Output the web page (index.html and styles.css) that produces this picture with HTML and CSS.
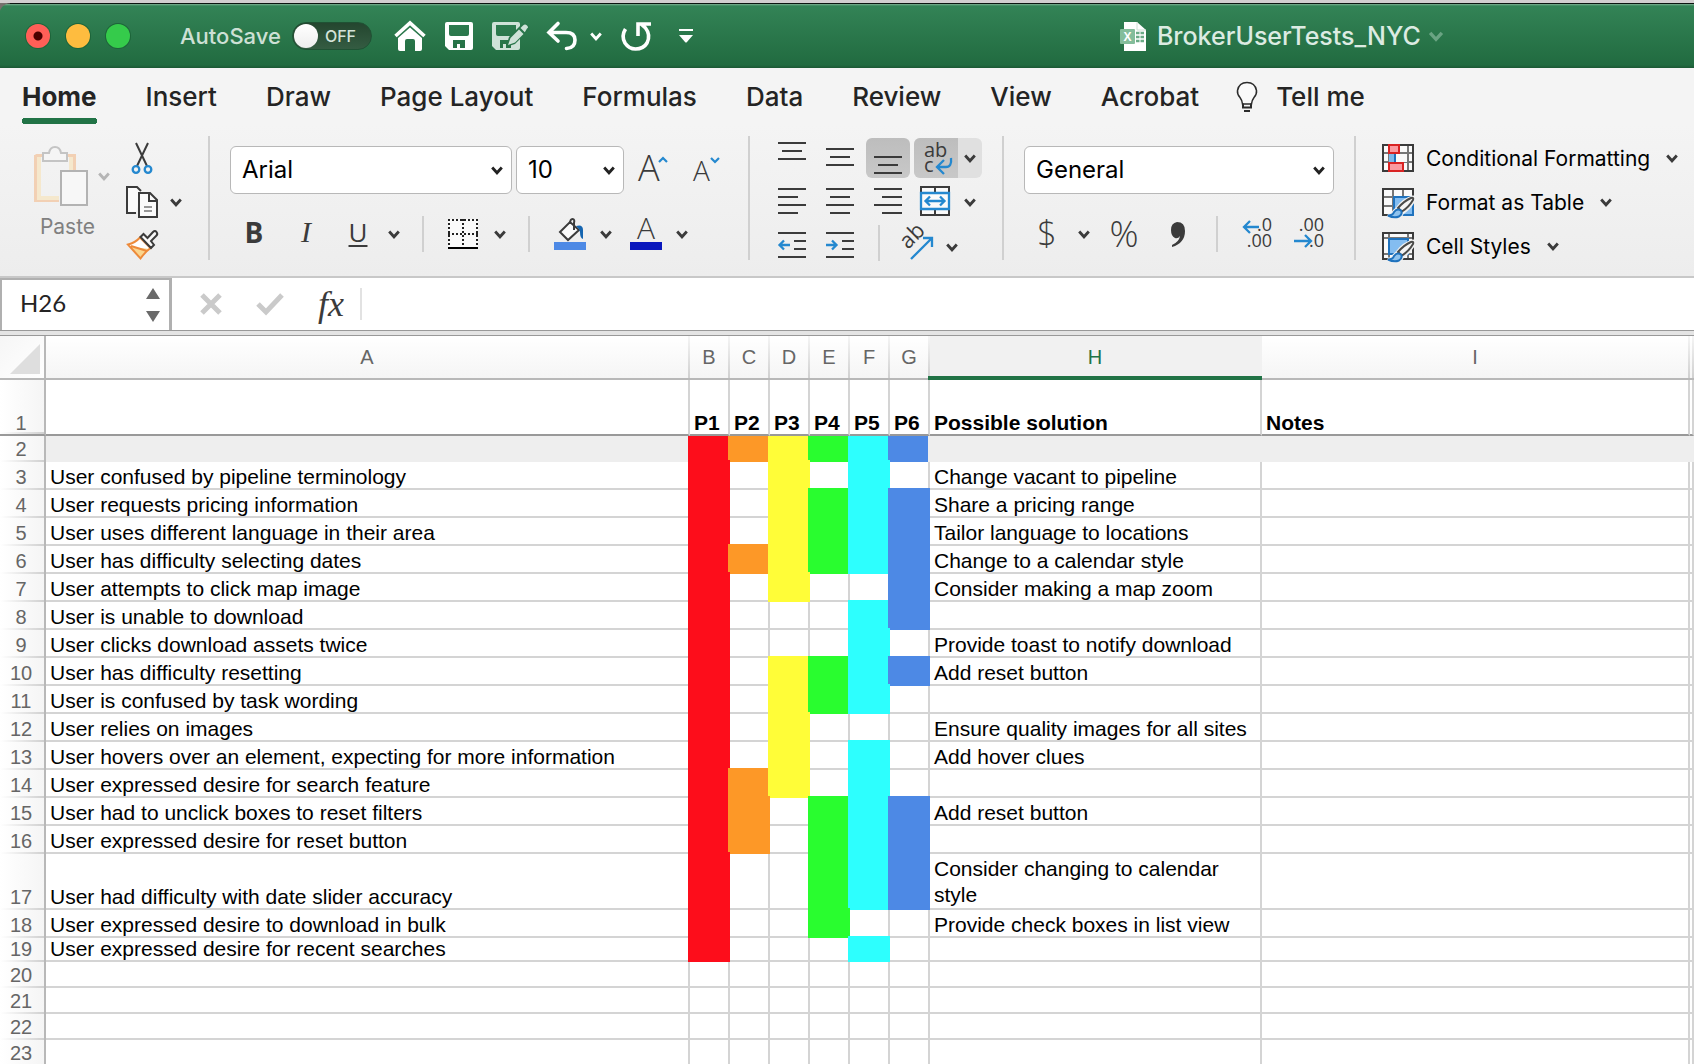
FILE: index.html
```html
<!DOCTYPE html>
<html lang="en">
<head>
<meta charset="utf-8">
<title>BrokerUserTests_NYC</title>
<link rel="stylesheet" href="styles.css">
</head>
<body>
<svg class="sprite" aria-hidden="true">
  <symbol id="chevron" viewBox="0 0 12 9"><path d="M1.2 1.5 6 6.8l4.8-5.3" fill="none" stroke="currentColor" stroke-width="2.8"/></symbol>
  <symbol id="brush" viewBox="0 0 34 32">
    <path d="M16 20Q22 12 31 9.500Q33 10 31 13Q27 20 21 24ZM6 27.500Q11 27.500 12 24Q15 20 19 22.500Q21 26 17 28.500Q12 30.500 6 27.500Z" fill="#f1f1f1" stroke="#f1f1f1" stroke-width="4"/>
    <path d="M16 20Q22 13 29 10Q32 9 31 12Q27 19 20 23.500Z" fill="#f4f4f4" stroke="#4a4a48" stroke-width="2"/>
    <path d="M6 27.500Q11 27.500 12 24Q15 20 19 22.500Q21 26 17 28.500Q12 30.500 6 27.500Z" fill="#8fc3ee" stroke="#1f72bd" stroke-width="2"/>
  </symbol>
</svg>

<header class="titlebar">
  <div class="lights">
    <button class="light light-close" aria-label="Close"></button>
    <button class="light light-min" aria-label="Minimize"></button>
    <button class="light light-max" aria-label="Zoom"></button>
  </div>
  <label class="autosave">AutoSave
    <span class="switch"><input type="checkbox"><span class="switch-state">OFF</span></span>
  </label>
  <div class="quick">
    <button aria-label="Home"><svg width="32" height="30" viewBox="0 0 32 30"><path d="M1.500 15 16 2l14.500 13" fill="none" stroke="#fff" stroke-width="3.600"/><path d="M4 17 16 6.500 28 17v11q0 2-2 2h-5V20q0-2-2-2h-6q-2 0-2 2v10H6q-2 0-2-2Z" fill="#fff"/></svg></button>
    <button aria-label="Save"><svg width="28" height="28" viewBox="0 0 28 28"><path fill="#fff" fill-rule="evenodd" d="M2 0h24q2 0 2 2v24q0 2-2 2H4l-4-4V2Q0 0 2 0ZM4 3v9q0 2 2 2h16q2 0 2-2V3ZM8 18v8h4v-4h3v4h5v-8Z"/></svg></button>
    <button aria-label="Save and edit"><svg width="36" height="28" viewBox="0 0 36 28"><path fill="#cfe2d8" fill-rule="evenodd" d="M2 0h24q2 0 2 2v24q0 2-2 2H4l-4-4V2Q0 0 2 0ZM4 3v9q0 2 2 2h16q2 0 2-2V3ZM8 18v8h3v-4h3v4h5v-8Z"/><path d="M14 25 17 15 30 2Q33 0 36 3t0 6L23 22Z" fill="#2a764b"/><path d="m16 23 2.500-7L27 7.500l4.500 4.500L23 20.500ZM28.500 6 31 3.500q2-2 4 0t0 3L32.800 10.300Z" fill="#cfe2d8"/></svg></button>
    <button aria-label="Undo"><svg width="30" height="28" viewBox="0 0 30 28"><path d="M11 1.500 2 10.500l9 8.500M3 10.500h16q9 0 9 7.500 0 8-8.500 8.500" fill="none" stroke="#fff" stroke-width="3.600" stroke-linecap="round"/></svg></button>
    <button class="tight" aria-label="Undo history"><svg class="chev thin" width="12" height="9"><use href="#chevron"/></svg></button>
    <button aria-label="Redo"><svg width="30" height="30" viewBox="0 0 30 30"><path d="M4.500 8Q0 15 4 22q4 6 10.500 6 8 0 11.500-6 4-8-1.500-15L20 3M17 15V3h13" fill="none" stroke="#fff" stroke-width="3.600"/></svg></button>
    <button class="wide" aria-label="Customize toolbar"><svg width="14" height="14" viewBox="0 0 14 14"><path d="M0 0h14v2H0ZM0 6h14l-6 7q-1 1-2 0Z" fill="#fff"/></svg></button>
  </div>
  <button class="doc">
    <svg width="26" height="30" viewBox="0 0 26 30"><path d="M4 1h13l9 8v21H4Z" fill="#fff"/><path d="M17 1v8h9" fill="none" stroke="#cfe0d6"/><rect y="8" width="15" height="15" rx="1" fill="#84bd9b"/><path d="M16 12h8M16 16h8M16 20h8" stroke="#6bab86" stroke-width="2.600"/><path d="M20 11v11" stroke="#fff"/><text x="7.500" y="20" text-anchor="middle" class="glyph-x">X</text></svg>
    <span>BrokerUserTests_NYC</span>
    <svg class="chev thin dim" width="16" height="11"><use href="#chevron"/></svg>
  </button>
</header>

<nav class="tabs" aria-label="Ribbon">
  <button class="tab active">Home</button>
  <button class="tab">Insert</button>
  <button class="tab">Draw</button>
  <button class="tab">Page Layout</button>
  <button class="tab">Formulas</button>
  <button class="tab">Data</button>
  <button class="tab">Review</button>
  <button class="tab">View</button>
  <button class="tab">Acrobat</button>
  <button class="tab tell"><svg width="22" height="32" viewBox="0 0 22 32"><path d="M6.500 23Q6 19 4 16.500 1 13 1.500 9.500 3 1.500 11 1.500t9.500 8Q21 13 18 16.500 16 19 15.500 23Z" fill="#fafafa" stroke="#2b2b2b" stroke-width="1.500"/><path d="M7 22.500v4h8v-4M8 30h6" fill="none" stroke="#2b2b2b" stroke-width="2"/></svg>Tell me</button>
</nav>

<section class="ribbon">
  <div class="group clipboard">
    <button class="paste">
      <svg width="54" height="60" viewBox="0 0 54 60"><path d="M1.500 9.500h39v20M25 54.500H1.500V9" fill="none" stroke="#f2d0b4" stroke-width="3"/><path d="M5 11v41h20M37 11v13" fill="none" stroke="#f5e8cd" stroke-width="4"/><path d="M9 15V7h6Q16 1 21 1t6 6h6v8Z" fill="#f5f5f5" stroke="#c4c4c4" stroke-width="2"/><path d="M27 25h26v34H27Z" fill="#f7f7f7" stroke="#b3b3b3" stroke-width="2"/></svg>
      <svg class="chev" width="12" height="9"><use href="#chevron"/></svg>
      <span>Paste</span>
    </button>
    <div class="cliptools">
      <button aria-label="Cut"><svg width="32" height="32" viewBox="0 0 32 32"><path d="M10 1 21 24M22 1 11 24" fill="none" stroke="#3b3b3b" stroke-width="2"/><g fill="none" stroke="#2488cf" stroke-width="2.300"><circle cx="10" cy="27.500" r="3.300"/><circle cx="22" cy="27.500" r="3.300"/></g></svg></button>
      <button aria-label="Copy"><svg width="32" height="32" viewBox="0 0 32 32"><path d="M10 27H1V1h10l4 4" fill="#fafafa" stroke="#3b3b3b" stroke-width="2"/><path d="M13 7h11l7 7v17H13Z" fill="#fafafa" stroke="#3b3b3b" stroke-width="2"/><path d="M23 7v8h8" fill="none" stroke="#3b3b3b" stroke-width="2"/><path d="M18 21h8M18 25h8" stroke="#777" stroke-width="1.600"/></svg><svg class="chev" width="12" height="9"><use href="#chevron"/></svg></button>
      <button aria-label="Format painter"><svg width="32" height="30" viewBox="0 0 32 30"><path d="M2 14.500Q9 13 14 7.500L24.500 18Q19 22 14.500 28.500Z" fill="#fff"/><path d="m5 17 19 2-9.500 9Z" fill="#fbd58d"/><path d="M2 14.500Q9 13 14 7.500L24.500 18Q19 22 14.500 28.500ZM5 16l16 5" fill="none" stroke="#ed8a3a" stroke-width="2"/><path d="m14.500 7 3-3 4 4 5.500-6q2-2 3.500 0t0 3.500L25 11l3 4-3 3Z" fill="#fafafa" stroke="#3b3b3b" stroke-width="2"/></svg></button>
    </div>
  </div>

  <div class="group font">
    <div class="row">
      <label class="combo combo-font"><select aria-label="Font"><option>Arial</option></select><svg class="chev" width="12" height="9"><use href="#chevron"/></svg></label>
      <label class="combo combo-size"><select aria-label="Font size"><option>10</option></select><svg class="chev" width="12" height="9"><use href="#chevron"/></svg></label>
      <button class="grow" aria-label="Increase font size"><svg width="32" height="32" viewBox="0 0 32 32"><text x="0" y="27" class="thin-glyph size-36">A</text><path d="m21 8 4-4 4 4" fill="none" stroke="#2488cf" stroke-width="2.200"/></svg></button>
      <button class="shrink" aria-label="Decrease font size"><svg width="30" height="32" viewBox="0 0 30 32"><text x="1" y="27" class="thin-glyph size-28">A</text><path d="m19 4 4 4 4-4" fill="none" stroke="#2488cf" stroke-width="2.200"/></svg></button>
    </div>
    <div class="fontrow">
      <button class="letter bold">B</button>
      <button class="letter ital">I</button>
      <button class="letter under">U</button>
      <button aria-label="Underline styles"><svg class="chev" width="12" height="9"><use href="#chevron"/></svg></button>
      <span class="sep"></span>
      <button aria-label="Borders"><svg width="30" height="30" viewBox="0 0 30 30"><path d="M0 0h30v28H0Z" fill="#fafafa"/><path d="M0 1h30M0 15h30M1 0v27M15 0v27M29 0v27" stroke="#222" stroke-width="2" stroke-dasharray="2 2"/><path d="M0 29h30" stroke="#000" stroke-width="2"/></svg></button>
      <button aria-label="More borders"><svg class="chev" width="12" height="9"><use href="#chevron"/></svg></button>
      <span class="sep"></span>
      <button aria-label="Fill color"><svg width="32" height="32" viewBox="0 0 32 32"><path d="M6 14 16 4l9 8-11 10Z" fill="#fafafa" stroke="#3b3b3b" stroke-width="2"/><path d="M16 6q0-5 2.500-5T20 5v7" fill="none" stroke="#3b3b3b" stroke-width="2"/><path d="M22 8q7-2 7 4v9q-3-1-3-7Q25 10 22 8Z" fill="#1565b0"/><path d="M0 24h32v8H0Z" fill="#4d89e5"/></svg></button>
      <button aria-label="More fill colors"><svg class="chev" width="12" height="9"><use href="#chevron"/></svg></button>
      <button aria-label="Font color"><svg width="32" height="32" viewBox="0 0 32 32"><text x="16" y="21" text-anchor="middle" class="thin-glyph size-30">A</text><path d="M0 24h32v8H0Z" fill="#0917bd"/></svg></button>
      <button aria-label="More font colors"><svg class="chev" width="12" height="9"><use href="#chevron"/></svg></button>
    </div>
  </div>

  <div class="group align">
    <div class="row">
      <button class="tool" aria-label="Align top"><svg width="44" height="40"><path d="M8 5h28M12 13h20M8 21h28"/></svg></button>
      <button class="tool" aria-label="Align middle"><svg width="44" height="40"><path d="M8 11h28M12 19h20M8 27h28"/></svg></button>
      <button class="tool on" aria-label="Align bottom"><svg width="44" height="40"><path d="M8 19h28M12 27h20M8 35h28"/></svg></button>
      <span class="split"><button class="tool on" aria-label="Wrap text"><svg width="44" height="40"><text x="10" y="19" class="glyph size-20">ab</text><text x="10" y="34" class="glyph size-20">c</text><path class="blue" d="M37 20q1 9-5 9h-8M30 22l-7 7 7 7"/></svg></button><button class="more" aria-label="Wrap options"><svg class="chev" width="12" height="9"><use href="#chevron"/></svg></button></span>
    </div>
    <div class="row">
      <button class="tool" aria-label="Align left"><svg width="44" height="40"><path d="M8 7h28M8 15h20M8 23h28M8 31h20"/></svg></button>
      <button class="tool" aria-label="Align center"><svg width="44" height="40"><path d="M8 7h28M12 15h20M8 23h28M12 31h20"/></svg></button>
      <button class="tool" aria-label="Align right"><svg width="44" height="40"><path d="M8 7h28M16 15h20M8 23h28M16 31h20"/></svg></button>
      <span class="split plain"><button class="tool" aria-label="Merge"><svg width="44" height="40"><path class="paper" d="M7 5h28v28H7ZM21 5v28"/><path class="blue paper" d="M7 11h28v16H7Z"/><path class="blue" d="M12 19h18M16 14.500 11.500 19l4.500 4.500M26 14.500l4.500 4.500-4.500 4.500"/></svg></button><button class="more" aria-label="Merge options"><svg class="chev" width="12" height="9"><use href="#chevron"/></svg></button></span>
    </div>
    <div class="row short">
      <button class="tool" aria-label="Decrease indent"><svg width="44" height="34"><path d="M8 7h28M24 15h12M24 23h12M8 31h28"/><path class="blue" d="M20 19H9M14 14.500 9.500 19l4.500 4.500"/></svg></button>
      <button class="tool" aria-label="Increase indent"><svg width="44" height="34"><path d="M8 7h28M24 15h12M24 23h12M8 31h28"/><path class="blue" d="M8 19h11M14 14.500l4.500 4.500-4.500 4.500"/></svg></button>
      <span class="sep"></span>
      <button class="tool orient" aria-label="Orientation"><svg width="34" height="34"><text transform="translate(8 24) rotate(-45)" class="glyph size-22">ab</text><path class="blue" d="M11 33 31 13M23 12h9v9"/></svg><svg class="chev" width="12" height="9"><use href="#chevron"/></svg></button>
    </div>
  </div>

  <div class="group number">
    <label class="combo combo-format"><select aria-label="Number format"><option>General</option></select><svg class="chev" width="12" height="9"><use href="#chevron"/></svg></label>
    <div class="numrow">
      <button aria-label="Currency"><svg width="24" height="36"><text x="11" y="30" text-anchor="middle" class="thin-glyph size-34">$</text></svg></button>
      <button aria-label="More currencies"><svg class="chev" width="12" height="9"><use href="#chevron"/></svg></button>
      <button aria-label="Percent"><svg width="30" height="36"><text x="14" y="31" text-anchor="middle" class="thin-glyph size-36">%</text></svg></button>
      <button aria-label="Comma style"><svg width="22" height="36" viewBox="0 0 22 36"><path d="M11 6q8 0 8 9 0 12-13 16v-2q7-3 8-9-2 3-5 2-4-2-4-8 0-7 6-8Z" fill="#3b3b3b"/></svg></button>
      <span class="sep"></span>
      <button aria-label="Increase decimal"><svg width="32" height="36"><text x="30" y="15" text-anchor="end" class="glyph size-18">.0</text><text x="30" y="31" text-anchor="end" class="glyph size-18">.00</text><path class="blue" d="M17 11H2M8 5l-6 6 6 6"/></svg></button>
      <button aria-label="Decrease decimal"><svg width="32" height="36"><text x="30" y="15" text-anchor="end" class="glyph size-18">.00</text><text x="30" y="31" text-anchor="end" class="glyph size-18">.0</text><path class="blue" d="M0 25h16M11 19l6 6-6 6"/></svg></button>
    </div>
  </div>

  <div class="group styles">
    <button class="stylebtn"><svg width="32" height="28" viewBox="0 0 32 28"><path d="M1 1h30v26H1Z" fill="#fafafa" stroke="#3b3b3b" stroke-width="2"/><path d="M2 9h28M2 18h28M7 2v24M17 2v24M26 2v24" stroke="#777" stroke-width="2"/><path d="M14 10h11v8H14Z" fill="#fafafa"/><path d="M7 9h7v10H7Z" fill="#7fb9ea"/><path d="M13 9v10" stroke="#1f72bd" stroke-width="2"/><path d="M7 1h10v8H7ZM7 19h14v8H7Z" fill="#fb9aa0" stroke="#d92323" stroke-width="2"/></svg>Conditional Formatting<svg class="chev" width="12" height="9"><use href="#chevron"/></svg></button>
    <button class="stylebtn"><svg width="32" height="28" viewBox="0 0 32 28"><path d="M1 1h30v26H1Z" fill="#fafafa" stroke="#3b3b3b" stroke-width="2"/><path d="M2 9h28M2 18h28M11 2v24M21 2v24" stroke="#777" stroke-width="2"/><path d="M12 9h19v18H12Z" fill="#84bdf0" stroke="#1f72bd" stroke-width="2"/><use href="#brush" width="34" height="32"/></svg>Format as Table<svg class="chev" width="12" height="9"><use href="#chevron"/></svg></button>
    <button class="stylebtn"><svg width="32" height="28" viewBox="0 0 32 28"><path d="M1 1h30v26H1Z" fill="#fafafa" stroke="#3b3b3b" stroke-width="2"/><path d="M2 6h28M2 22h28M7 2v24M26 2v24" stroke="#777" stroke-width="2"/><path d="M7 7h19v15H7Z" fill="#84bdf0" stroke="#1f72bd" stroke-width="2"/><use href="#brush" width="34" height="32"/></svg>Cell Styles<svg class="chev" width="12" height="9"><use href="#chevron"/></svg></button>
  </div>
</section>

<section class="formulabar">
  <div class="namebox">
    <input type="text" value="H26" aria-label="Name box">
    <svg width="14" height="34" viewBox="0 0 14 34"><path d="M7 0l7 11H0ZM0 23h14L7 34Z" fill="#6a6a6a"/></svg>
  </div>
  <button class="cancel" aria-label="Cancel"><svg width="22" height="22"><path d="m2 2 18 18M20 2 2 20" stroke="#cacaca" stroke-width="5"/></svg></button>
  <button class="enter" aria-label="Enter"><svg width="28" height="22"><path d="m2 11 8 8L26 2" fill="none" stroke="#cacaca" stroke-width="5"/></svg></button>
  <button class="fx" aria-label="Insert function">fx</button>
  <input class="formula" type="text" aria-label="Formula">
</section>

<main class="sheet">
<table>
  <colgroup><col class="c-num"><col class="c-a"><col class="c-p"><col class="c-p"><col class="c-p"><col class="c-p"><col class="c-p"><col class="c-p"><col class="c-h"><col class="c-i"><col></colgroup>
  <thead>
    <tr><th class="corner"><svg width="30" height="30"><path d="M30 0v30H0Z" fill="#dedede"/></svg></th><th>A</th><th>B</th><th>C</th><th>D</th><th>E</th><th>F</th><th>G</th><th class="current">H</th><th>I</th><th></th></tr>
  </thead>
  <tbody>
    <tr class="titles"><th>1</th><td></td><td>P1</td><td>P2</td><td>P3</td><td>P4</td><td>P5</td><td>P6</td><td>Possible solution</td><td>Notes</td><td></td></tr>
    <tr class="band"><th>2</th><td></td><td class="red"></td><td class="orange"></td><td class="yellow"></td><td class="green"></td><td class="cyan"></td><td class="blue-fill"></td><td></td><td></td><td></td></tr>
    <tr><th>3</th><td>User confused by pipeline terminology</td><td class="red"></td><td></td><td class="yellow"></td><td></td><td class="cyan"></td><td></td><td>Change vacant to pipeline</td><td></td><td></td></tr>
    <tr><th>4</th><td>User requests pricing information</td><td class="red"></td><td></td><td class="yellow"></td><td class="green"></td><td class="cyan"></td><td class="blue-fill"></td><td>Share a pricing range</td><td></td><td></td></tr>
    <tr><th>5</th><td>User uses different language in their area</td><td class="red"></td><td></td><td class="yellow"></td><td class="green"></td><td class="cyan"></td><td class="blue-fill"></td><td>Tailor language to locations</td><td></td><td></td></tr>
    <tr><th>6</th><td>User has difficulty selecting dates</td><td class="red"></td><td class="orange"></td><td class="yellow"></td><td class="green"></td><td class="cyan"></td><td class="blue-fill"></td><td>Change to a calendar style</td><td></td><td></td></tr>
    <tr><th>7</th><td>User attempts to click map image</td><td class="red"></td><td></td><td class="yellow"></td><td></td><td></td><td class="blue-fill"></td><td>Consider making a map zoom</td><td></td><td></td></tr>
    <tr><th>8</th><td>User is unable to download</td><td class="red"></td><td></td><td></td><td></td><td class="cyan"></td><td class="blue-fill"></td><td></td><td></td><td></td></tr>
    <tr><th>9</th><td>User clicks download assets twice</td><td class="red"></td><td></td><td></td><td></td><td class="cyan"></td><td></td><td>Provide toast to notify download</td><td></td><td></td></tr>
    <tr><th>10</th><td>User has difficulty resetting</td><td class="red"></td><td></td><td class="yellow"></td><td class="green"></td><td class="cyan"></td><td class="blue-fill"></td><td>Add reset button</td><td></td><td></td></tr>
    <tr><th>11</th><td>User is confused by task wording</td><td class="red"></td><td></td><td class="yellow"></td><td class="green"></td><td class="cyan"></td><td></td><td></td><td></td><td></td></tr>
    <tr><th>12</th><td>User relies on images</td><td class="red"></td><td></td><td class="yellow"></td><td></td><td></td><td></td><td>Ensure quality images for all sites</td><td></td><td></td></tr>
    <tr><th>13</th><td>User hovers over an element, expecting for more information</td><td class="red"></td><td></td><td class="yellow"></td><td></td><td class="cyan"></td><td></td><td>Add hover clues</td><td></td><td></td></tr>
    <tr><th>14</th><td>User expressed desire for search feature</td><td class="red"></td><td class="orange"></td><td class="yellow"></td><td></td><td class="cyan"></td><td></td><td></td><td></td><td></td></tr>
    <tr><th>15</th><td>User had to unclick boxes to reset filters</td><td class="red"></td><td class="orange"></td><td></td><td class="green"></td><td class="cyan"></td><td class="blue-fill"></td><td>Add reset button</td><td></td><td></td></tr>
    <tr><th>16</th><td>User expressed desire for reset button</td><td class="red"></td><td class="orange"></td><td></td><td class="green"></td><td class="cyan"></td><td class="blue-fill"></td><td></td><td></td><td></td></tr>
    <tr class="double"><th>17</th><td>User had difficulty with date slider accuracy</td><td class="red"></td><td></td><td></td><td class="green"></td><td class="cyan"></td><td class="blue-fill"></td><td class="wrapped">Consider changing to calendar style</td><td></td><td></td></tr>
    <tr><th>18</th><td>User expressed desire to download in bulk</td><td class="red"></td><td></td><td></td><td class="green"></td><td></td><td></td><td>Provide check boxes in list view</td><td></td><td></td></tr>
    <tr class="slim"><th>19</th><td>User expressed desire for recent searches</td><td class="red"></td><td></td><td></td><td></td><td class="cyan"></td><td></td><td></td><td></td><td></td></tr>
    <tr class="blank"><th>20</th><td></td><td></td><td></td><td></td><td></td><td></td><td></td><td></td><td></td><td></td></tr>
    <tr class="blank"><th>21</th><td></td><td></td><td></td><td></td><td></td><td></td><td></td><td></td><td></td><td></td></tr>
    <tr class="blank"><th>22</th><td></td><td></td><td></td><td></td><td></td><td></td><td></td><td></td><td></td><td></td></tr>
    <tr class="blank"><th>23</th><td></td><td></td><td></td><td></td><td></td><td></td><td></td><td></td><td></td><td></td></tr>
  </tbody>
</table>
</main>
</body>
</html>
```
FILE: styles.css
```css
* { box-sizing: border-box; }
body {
  margin: 0;
  height: 100vh;
  overflow: hidden;
  display: flex;
  flex-direction: column;
  font-family: Inter, "Liberation Sans", sans-serif;
  color: #242424;
  background: #fff;
}
button, input, select {
  font: inherit;
  color: inherit;
  background: none;
  border: 0;
  padding: 0;
  margin: 0;
  border-radius: 0;
  outline: 0;
}
button { display: flex; align-items: center; flex: none; }
svg { display: block; flex: none; overflow: visible; }
.sprite { position: absolute; width: 0; height: 0; }
.chev { color: #3b3b3b; }
.row { display: flex; }

/* title bar */
.titlebar {
  flex: none;
  display: flex;
  align-items: center;
  height: 68px;
  border-top: 3px solid #d2cecf;
  padding: 1px 0 0 26px;
  background: radial-gradient(circle at 10px 11px, transparent 10px, #77706d 11px) left top / 10px 10px no-repeat,
    linear-gradient(#0c1410 1px, #7db092 1px, #338356 3px, #216b40 62px, #1b5834 65px);
}
.lights { display: flex; gap: 16px; }
.light { width: 24px; height: 24px; border-radius: 50%; box-shadow: 0 0 0 1px #1d6439; }
.light-close { background: radial-gradient(circle, #4a0000 4px, #ff5f57 5px); }
.light-min { background: #febc3f; }
.light-max { background: #35cb4b; }
.autosave {
  display: flex;
  align-items: center;
  gap: 11px;
  margin-left: 50px;
  font-size: 22px;
  font-weight: 500;
  color: #cde0d5;
}
.switch { display: grid; align-items: center; }
.switch > * { grid-area: 1 / 1; }
.switch input {
  appearance: none;
  width: 80px;
  height: 28px;
  padding: 1px;
  border-radius: 14px;
  background: linear-gradient(#24462f, #345c42);
  border: 1px solid #1f5234;
}
.switch input::before {
  content: "";
  display: block;
  width: 24px;
  height: 24px;
  border-radius: 50%;
  background: linear-gradient(#fff, #eee);
}
.switch-state { padding-left: 33px; font-size: 16px; color: #d3e3d9; }
.quick { display: flex; align-items: center; gap: 19px; margin-left: 22px; }
.quick .tight { margin-left: -6px; }
.quick .wide { margin-left: 9px; }
.thin { color: #fff; }
.dim { color: #6aa483; }
.doc { margin-left: 427px; font-size: 25px; font-weight: 500; color: #dcebe2; gap: 11px; }
.doc .chev { margin-left: -4px; }
.glyph-x { font: bold 12px "Liberation Sans", sans-serif; fill: #fff; }

/* ribbon tabs */
.tabs {
  flex: none;
  display: flex;
  gap: 49px;
  padding: 13px 22px 0;
  background: #f4f4f4;
}
.tab {
  height: 43px;
  align-items: flex-start;
  font-size: 26px;
  font-weight: 500;
  line-height: 32px;
}
.tab.active {
  font-weight: 700;
  background: radial-gradient(circle at 3px 3px, #217346 3px, transparent 3px) left bottom / 3px 6px no-repeat,
    radial-gradient(circle at 0 3px, #217346 3px, transparent 3px) right bottom / 3px 6px no-repeat,
    linear-gradient(#217346, #217346) center bottom / calc(100% - 6px) 6px no-repeat;
}
.tell { gap: 18px; margin-left: -12px; }

/* ribbon */
.ribbon {
  flex: none;
  display: flex;
  padding: 12px 0 16px;
  background: linear-gradient(#f4f4f4, #ededed);
  border-bottom: 2px solid #c8c8c8;
}
.group { flex: none; padding: 0 20px; border-left: 2px solid #d0d0d0; }
.group:first-child { border-left: 0; }
.clipboard { display: flex; gap: 16px; padding: 6px 26px 0 34px; }
.paste {
  display: grid;
  grid-template-columns: 54px 12px;
  column-gap: 10px;
  align-content: start;
  align-items: center;
  padding-top: 4px;
}
.paste span { padding-top: 6px; width: 67px; text-align: center; font-size: 21px; line-height: 30px; color: #808080; }
.paste .chev { color: #b5b5b5; }
.cliptools { display: flex; flex-direction: column; gap: 12px; }
.cliptools button { gap: 12px; }
.combo {
  display: grid;
  align-items: center;
  height: 48px;
  font-size: 24px;
  color: #000;
}
.combo > * { grid-area: 1 / 1; }
.combo select {
  appearance: none;
  width: 100%;
  height: 48px;
  padding: 0 11px 2px;
  background: #fff;
  border: 1px solid #b8b8b8;
  border-radius: 6px;
}
.combo .chev { justify-self: end; margin-right: 9px; color: #222; }
.combo-font { width: 282px; }
.combo-size { width: 108px; }
.combo-format { width: 310px; }
.font { padding: 10px 26px 0 20px; }
.font .row { gap: 4px; align-items: center; }
.font .grow { margin-left: 10px; }
.font .shrink { margin-left: 18px; }
.fontrow {
  display: grid;
  grid-template-columns: 52px 52px 48px 34px 26px 46px 34px 26px 46px 30px 46px 12px;
  align-items: center;
  height: 36px;
  margin-top: 22px;
  padding-left: 6px;
}
.letter { width: 36px; height: 36px; padding-bottom: 4px; justify-content: center; font-size: 28px; line-height: 32px; color: #3b3b3b; }
.bold { font-family: "Open Sans", sans-serif; font-weight: 700; }
.ital { font-family: "Liberation Serif", serif; font-style: italic; font-size: 30px; }
.under { font-family: "Open Sans", sans-serif; font-weight: 400; font-size: 26px; text-decoration: underline; text-decoration-thickness: 2px; text-underline-offset: 3px; }
.sep { width: 2px; height: 36px; background: #d0d0d0; }
.thin-glyph { font-family: "Open Sans", sans-serif; font-weight: 300; fill: #3b3b3b; }
.glyph { font-family: "Open Sans", sans-serif; fill: #3b3b3b; }
.size-36 { font-size: 36px; }
.size-34 { font-size: 34px; }
.size-30 { font-size: 30px; }
.size-28 { font-size: 28px; }
.size-22 { font-size: 22px; }
.size-20 { font-size: 20px; }
.size-18 { font-size: 18px; }
.align { display: flex; flex-direction: column; gap: 4px; padding-top: 2px; }
.align .row { gap: 4px; height: 40px; align-items: center; }
.align .short { height: 34px; }
.tool path { fill: none; stroke: #3b3b3b; stroke-width: 2; }
path.blue, .tool path.blue { fill: none; stroke: #2488cf; stroke-width: 2.3; }
.tool path.paper { fill: #fafafa; }
.on { background: linear-gradient(#bdbdbd, #c8c8c8); border-radius: 6px; }
.split { display: flex; border-radius: 6px; background: #e0e0e0; }
.split .on { border-radius: 6px 0 0 6px; }
.plain { background: none; }
.more { width: 24px; justify-content: center; }
.short .sep { margin: 0 16px 0 12px; }
.orient { gap: 12px; align-items: flex-end; }
.orient .chev { margin-bottom: 8px; }
.number { padding-top: 10px; }
.numrow {
  display: grid;
  grid-template-columns: 42px 32px 56px 50px 26px 52px 32px;
  align-items: center;
  height: 36px;
  margin-top: 22px;
  padding-left: 12px;
}
.styles { display: flex; flex-direction: column; gap: 16px; padding: 8px 0 0 26px; }
.stylebtn { gap: 12px; height: 28px; font-size: 21px; color: #000; }
.stylebtn .chev { margin-left: 4px; }

/* formula bar */
.formulabar {
  flex: none;
  display: flex;
  align-items: center;
  height: 58px;
  background: #fff;
  border-bottom: 1px solid #999;
  box-shadow: inset 0 -4px #e4e4e4, inset 0 -5px #999;
  padding-bottom: 5px;
}
.namebox {
  display: flex;
  align-items: center;
  align-self: stretch;
  width: 172px;
  padding: 0 9px 0 18px;
  border: 2px solid #b0b0b0;
  border-width: 2px 3px 0 2px;
  font: 24px Lato, sans-serif;
}
.namebox input { flex: 1; min-width: 0; padding-bottom: 5px; }
.cancel { margin-left: 28px; }
.enter { margin-left: 34px; }
.fx {
  margin-left: 34px;
  padding-right: 16px;
  height: 32px;
  border-right: 2px solid #e2e2e2;
  font: italic 36px/32px "Liberation Serif", serif;
  color: #3b3b3b;
}
.formula { flex: 1; height: 40px; padding: 0 12px; font-size: 24px; }

/* worksheet */
.sheet { flex: 1; min-height: 0; overflow: hidden; }
table {
  width: 100%;
  table-layout: fixed;
  border-spacing: 0;
  font: 21px/22px "Liberation Sans", Arial, sans-serif;
  color: #000;
}
.c-num { width: 46px; }
.c-a { width: 644px; }
.c-p { width: 40px; }
.c-h { width: 332px; }
.c-i { width: 428px; }
tr { height: 28px; }
th { padding: 0; font-size: 20px; font-weight: 400; color: #666; }
td { padding: 0 0 0 4px; vertical-align: bottom; border: 0 solid #d4d4d4; border-width: 0 2px 2px 0; }
thead tr { height: 44px; }
thead th {
  padding-right: 2px;
  border-bottom: 2px solid #b8b8b8;
  background: linear-gradient(#f5f5f5, #d0d0d0) right / 2px 100% no-repeat, linear-gradient(#fff, #f5f5f5);
}
thead .corner { padding-right: 0; border-right: 2px solid #b8b8b8; background: linear-gradient(135deg, #f6f6f6, #fff); }
.corner svg { margin: 4px 0 0 10px; }
thead .current {
  padding-top: 2px;
  background: #f1f1f1;
  color: #217346;
  border-bottom: 4px solid #217346;
  border-image: linear-gradient(#217346, #217346) 0 0 4 0 / 0 0 4px 0 / 0 0 0 2px;
}
tbody th {
  padding: 0 2px 2px 0;
  vertical-align: bottom;
  border-right: 2px solid #b8b8b8;
  background: linear-gradient(90deg, #fff, #d0d0d0) bottom / 100% 2px no-repeat, linear-gradient(90deg, #fff, #f5f5f5);
}
.titles { height: 56px; }
.titles td { font-weight: 700; border-bottom-color: #999; }
.titles th { padding-bottom: 0; border-bottom: 2px solid #999; }
.band { height: 26px; }
.band td { background: #eee; border-color: #eee; box-shadow: -2px 0 #eee; }
.band td:nth-child(2) { box-shadow: none; }
.double { height: 56px; }
.wrapped { line-height: 26px; }
.slim { height: 24px; }
.blank { height: 26px; }
td.red { --fill: #fd0d1b; }
td.orange { --fill: #fd9827; }
td.yellow { --fill: #fffd38; }
td.green { --fill: #29fd2f; }
td.cyan { --fill: #2dfffe; }
td.blue-fill { --fill: #4d89e5; }
td[class]:not(.wrapped) { background: var(--fill); border-color: var(--fill); box-shadow: -2px -2px var(--fill), -2px 0 var(--fill), 0 -2px var(--fill); }
.band td[class]:not(.wrapped) { box-shadow: -2px 0 var(--fill); }
```
